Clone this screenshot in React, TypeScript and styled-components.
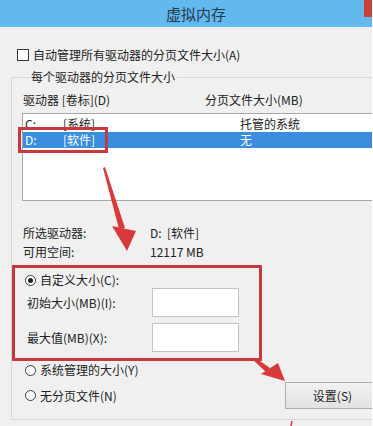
import styled, { createGlobalStyle } from 'styled-components';

const GlobalStyle = createGlobalStyle`
  html, body {
    margin: 0;
    padding: 0;
    background: #fff;
  }
  body {
    font-family: "Noto Sans CJK SC", "Noto Sans", sans-serif;
    font-size: 12px;
    color: #222;
  }
`;

const ANNOTATION_RED = '#c63a3f';

const Screen = styled.div`
  position: relative;
  width: 372px;
  height: 426px;
  overflow: hidden;
`;

const Window = styled.div`
  width: 395px;
  height: 426px;
  background: #f0f0f0;
`;

const TitleBar = styled.div`
  position: relative;
  height: 27px;
  display: flex;
  align-items: center;
  justify-content: center;
  background: #63b9ec;
  border-bottom: 1px solid #e6f1f8;
  color: #24394d;
  font-size: 15px;
  padding-right: 3px;
`;

const CloseButton = styled.div`
  position: absolute;
  left: 364px;
  top: 0;
  width: 12px;
  height: 17px;
  background: #c8403a;
`;

const CheckRow = styled.label`
  display: flex;
  align-items: center;
  gap: 4px;
  height: 14px;
  line-height: 14px;
  margin-top: 20px;
  padding-left: 17px;
`;

const CheckBox = styled.span`
  width: 12px;
  height: 12px;
  box-sizing: border-box;
  border: 1px solid #3a3a3a;
  background: #fff;
`;

const GroupBox = styled.fieldset`
  margin: 8px 10px 0 11px;
  padding: 9px 4px 10px 10px;
  border: 1px solid #d6d6d6;
  min-width: 0;
`;

const Legend = styled.legend`
  margin-left: 7px;
  padding: 0 2px;
  line-height: 14px;
`;

const ColumnHeader = styled.div`
  display: grid;
  grid-template-columns: 182px 1fr;
  line-height: 14px;
  padding-left: 1px;
`;

const ListBox = styled.div`
  position: relative;
  margin-top: 6px;
  height: 88px;
  box-sizing: border-box;
  padding-top: 2px;
  border: 1px solid #a8a8a8;
  background: #fff;
`;

const ListRow = styled.div<{ $selected?: boolean }>`
  display: grid;
  grid-template-columns: 38px 177px 1fr;
  height: 16px;
  line-height: 16px;
  padding-left: 2px;
  background: ${(p) => (p.$selected ? '#3b8de0' : 'transparent')};
  color: ${(p) => (p.$selected ? '#fff' : '#222')};
`;

const RowMarker = styled.div`
  position: absolute;
  left: -5px;
  top: 13px;
  width: 90px;
  height: 26px;
  box-sizing: border-box;
  border: 3px solid ${ANNOTATION_RED};
`;

const InfoGrid = styled.div`
  display: grid;
  grid-template-columns: 127px 1fr;
  line-height: 19px;
  margin-top: 22px;
  padding-left: 1px;
`;

const CustomBox = styled.div`
  width: 250px;
  box-sizing: border-box;
  margin: 4px 0 0 -10px;
  padding: 5px 0 6px 10px;
  border: 3px solid ${ANNOTATION_RED};
`;

const RadioRow = styled.label<{ $inset?: number }>`
  display: flex;
  align-items: center;
  gap: 4px;
  height: 14px;
  line-height: 14px;
  padding-left: ${(p) => p.$inset ?? 0}px;
`;

const Radio = styled.span<{ $checked?: boolean }>`
  position: relative;
  width: 11px;
  height: 11px;
  box-sizing: border-box;
  border: 1px solid #3a3a3a;
  border-radius: 50%;
  background: #fff;
  &::after {
    content: '';
    display: ${(p) => (p.$checked ? 'block' : 'none')};
    position: absolute;
    left: 2px;
    top: 2px;
    width: 5px;
    height: 5px;
    border-radius: 50%;
    background: #222;
  }
`;

const Fields = styled.div`
  display: grid;
  gap: 6px;
  margin-top: 1px;
`;

const FieldRow = styled.label`
  display: grid;
  grid-template-columns: 125px 87px;
  align-items: center;
  padding-left: 2px;
`;

const SizeInput = styled.input`
  width: 87px;
  height: 29px;
  box-sizing: border-box;
  border: 1px solid #c4c4c4;
  background: #fff;
  margin: 0;
`;

const SystemRow = styled.div`
  margin-top: 2px;
`;

const BottomRow = styled.div`
  display: flex;
  align-items: center;
  justify-content: space-between;
  margin-top: 5px;
`;

const SetButton = styled.button`
  width: 95px;
  height: 27px;
  margin: 0;
  border: 1px solid #adadad;
  background: linear-gradient(#f2f2f2, #e2e2e2);
  font-family: inherit;
  font-size: 12px;
  color: #222;
`;

const Annotations = styled.svg`
  position: absolute;
  left: 0;
  top: 0;
  pointer-events: none;
`;

const drives = [
  { letter: 'C:', label: '[系统]', size: '托管的系统' },
  { letter: 'D:', label: '[软件]', size: '无', selected: true },
];

export default function App() {
  return (
    <Screen>
      <GlobalStyle />
      <Window>
        <TitleBar>
          虚拟内存
          <CloseButton />
        </TitleBar>

        <CheckRow>
          <CheckBox />
          自动管理所有驱动器的分页文件大小(A)
        </CheckRow>

        <GroupBox>
          <Legend>每个驱动器的分页文件大小</Legend>
          <ColumnHeader>
            <span>驱动器 [卷标](D)</span>
            <span>分页文件大小(MB)</span>
          </ColumnHeader>
          <ListBox>
            {drives.map((d) => (
              <ListRow key={d.letter} $selected={d.selected}>
                <span>{d.letter}</span>
                <span>{d.label}</span>
                <span>{d.size}</span>
              </ListRow>
            ))}
            <RowMarker />
          </ListBox>

          <InfoGrid>
            <span>所选驱动器:</span>
            <span>D:&nbsp; [软件]</span>
            <span>可用空间:</span>
            <span>12117 MB</span>
          </InfoGrid>

          <CustomBox>
            <RadioRow>
              <Radio $checked />
              自定义大小(C):
            </RadioRow>
            <Fields>
              <FieldRow>
                <span>初始大小(MB)(I):</span>
                <SizeInput type="text" />
              </FieldRow>
              <FieldRow>
                <span>最大值(MB)(X):</span>
                <SizeInput type="text" />
              </FieldRow>
            </Fields>
          </CustomBox>

          <SystemRow>
            <RadioRow $inset={3}>
              <Radio />
              系统管理的大小(Y)
            </RadioRow>
          </SystemRow>
          <BottomRow>
            <RadioRow $inset={3}>
              <Radio />
              无分页文件(N)
            </RadioRow>
            <SetButton>设置(S)</SetButton>
          </BottomRow>
        </GroupBox>
      </Window>

      <Annotations width="373" height="426" viewBox="0 0 373 426">
        <polygon points="103,168 105,167 125,228 119,229" fill="#d83a3c" />
        <polygon points="112,226 136,231 127,251" fill="#d83a3c" />
        <polygon points="253,360 257,359 270,368 266,372" fill="#d83a3c" />
        <polygon points="261,374 278,363 285,381" fill="#d83a3c" />
        <line x1="292" y1="421" x2="291" y2="426" stroke="#d83a3c" strokeWidth="1.5" />
      </Annotations>
    </Screen>
  );
}
